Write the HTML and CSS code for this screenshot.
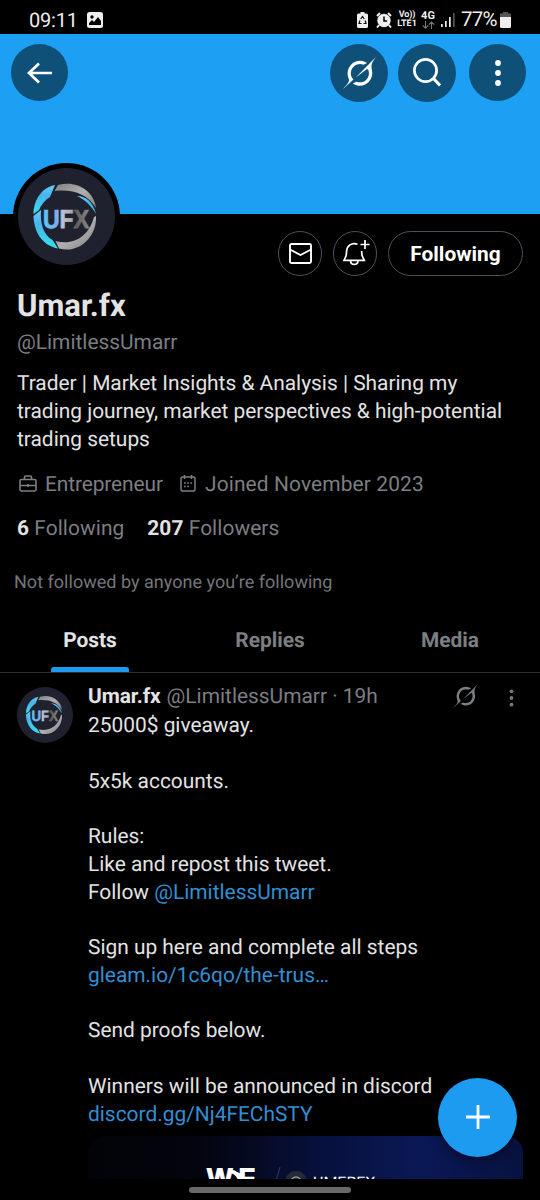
FILE: index.html
```html
<!DOCTYPE html>
<html lang="en">
<head>
<meta charset="utf-8">
<title>Umar.fx</title>
<link rel="stylesheet" href="styles.css">
</head>
<body>
<svg width="0" height="0" class="defs" aria-hidden="true">
  <defs>
    <linearGradient id="cyan" x1="0" y1="0" x2="0" y2="1"><stop offset="0" stop-color="#66d0fa"/><stop offset=".35" stop-color="#46b4ec"/><stop offset="1" stop-color="#35e0ee"/></linearGradient>
    <linearGradient id="silver" x1="0" y1="0" x2="1" y2="1"><stop offset="0" stop-color="#808080"/><stop offset=".5" stop-color="#b0b0b0"/><stop offset="1" stop-color="#808080"/></linearGradient>
    <linearGradient id="letters" x1="0" y1="0" x2="1" y2="0"><stop offset="0" stop-color="#55c9f2"/><stop offset=".3" stop-color="#7eaaf0"/><stop offset=".42" stop-color="#b5c2dd"/><stop offset=".62" stop-color="#aaa"/><stop offset=".7" stop-color="#5c5c5c"/><stop offset="1" stop-color="#8a8a8a"/></linearGradient>
    <symbol id="grok" viewBox="0 0 33 32"><path fill="currentColor" d="M12.745 20.54l10.97-8.19c.539-.4 1.307-.244 1.564.38 1.349 3.288.746 7.241-1.938 9.955-2.683 2.714-6.417 3.31-9.83 1.954l-3.728 1.745c5.347 3.697 11.84 2.782 15.898-1.324 3.219-3.255 4.216-7.692 3.284-11.693l.008.009c-1.351-5.878.332-8.227 3.782-13.031L33 0l-4.540 4.590v-.014L12.743 20.544m-2.263 1.987c-3.837-3.707-3.175-9.446.1-12.755 2.420-2.449 6.388-3.448 9.852-1.979l3.720-1.737c-.67-.49-1.530-1.017-2.515-1.387-4.455-1.854-9.789-.931-13.410 2.728-3.483 3.523-4.579 8.940-2.697 13.561 1.405 3.454-.899 5.898-3.220 8.364C1.490 30.200.666 31.074 0 32l10.478-9.466"/></symbol>
    <symbol id="ufx" viewBox="0 0 97 97">
      <circle cx="48.500" cy="48.500" r="48.500" fill="#20212e"/>
      <path fill="url(#cyan)" d="M37 17C25 19 15.500 31 15.500 46L21 42C23 37 27 32 32 29Z"/>
      <path fill="url(#cyan)" d="M15.500 48C16 66 26 78 40 80.500L34.500 72C26 67 22 57 23 42Z"/>
      <path fill="url(#silver)" d="M40 17C59 12 76 23 78 40C69 26 55 21 36.500 23Z"/>
      <path fill="url(#cyan)" d="M59 28C68 28 75 34 78 46C73 37 67 32 59 28Z"/>
      <path fill="url(#silver)" d="M78 48C79 70 60 86 41 80.500L37.500 73C56 78 71 68 76 49Z"/>
      <text x="25" y="59.500" textLength="46" lengthAdjust="spacingAndGlyphs" class="logo-letters" fill="url(#letters)" stroke="url(#letters)" stroke-width=".8">UFX</text>
    </symbol>
  </defs>
</svg>
<main class="phone">
  <header class="status">
    <span class="clock">09:11</span>
    <svg class="picture" width="16" height="16" viewBox="0 0 16 16"><rect width="16" height="16" rx="2.500" fill="#eee"/><circle cx="5" cy="5" r="1.700"/><path d="M2 13V11l3-3 2 2 4-5 3 4v4Z"/></svg>
    <div class="status-right">
      <svg width="11" height="16" viewBox="0 0 11 16"><path fill="#eee" d="M3.500 0h4v1.500H9.500Q11 1.500 11 3v11.500Q11 16 9.500 16h-8Q0 16 0 14.500V3Q0 1.500 1.500 1.500h2Z"/><path d="M3.700 7l1.800-2.500L7.300 7M8.200 8.500L9 11.500H6.500M4.500 11.500H2l.9-3" fill="none" stroke="#111" stroke-width="1.200"/></svg>
      <svg class="alarm" width="16" height="16" viewBox="0 0 16 16"><circle cx="8" cy="8.500" r="6.700" fill="#eee"/><path d="M1 4l3-3M15 4l-3-3M3 13l-2 2.500M13 13l2 2.500" stroke="#eee" stroke-width="2"/><path d="M8 4.500V9h3" stroke="#000" stroke-width="1.500" fill="none"/></svg>
      <div class="volte"><span class="vo">Vo))</span><span>LTE1</span></div>
      <div class="network"><span>4G</span><svg width="13" height="8" viewBox="0 0 13 8"><path d="M3.500 0v7M.8 4.500l2.700 2.700 2.700-2.700M9.500 8V1M6.800 3.700L9.500 1l2.700 2.700" fill="none" stroke="#777" stroke-width="1.100"/></svg></div>
      <svg class="signal" width="14" height="14" viewBox="0 0 14 14"><path fill="#eee" d="M0 11h1.700v3H0zM4 8h1.700v6H4zM8 4h1.700v10H8z"/><path fill="#555" d="M12 0h1.700v14H12z"/></svg>
      <span class="percent">77%</span>
      <svg width="11" height="16" viewBox="0 0 11 16"><path fill="#555" d="M3 0h5v1.500h3V5H0V1.500h3Z"/><path fill="#eee" d="M0 5h11v9.500Q11 16 9.500 16h-8Q0 16 0 14.500Z"/></svg>
    </div>
  </header>

  <section class="banner">
    <button class="round back" aria-label="Back"><svg width="26" height="22" viewBox="0 0 26 22"><path d="M25 11H2M12 1.500L2 11l10 9.500" fill="none" stroke="#fff" stroke-width="2.700"/></svg></button>
    <div class="banner-actions">
      <button class="round large" aria-label="Grok"><svg width="33" height="32"><use href="#grok"/></svg></button>
      <button class="round large" aria-label="Search"><svg class="search" width="28" height="29" viewBox="0 0 28 29"><circle cx="12.500" cy="12.500" r="11.100" fill="none" stroke="#fff" stroke-width="2.700"/><path d="M20 20l7 7.500" stroke="#fff" stroke-width="3"/></svg></button>
      <button class="round more" aria-label="More"><svg width="6" height="26" viewBox="0 0 6 26" fill="#fff"><circle cx="3" cy="3" r="2.900"/><circle cx="3" cy="13" r="2.900"/><circle cx="3" cy="23" r="2.900"/></svg></button>
    </div>
  </section>

  <section class="profile">
    <div class="profile-top">
      <div class="avatar"><svg width="97" height="97"><use href="#ufx"/></svg></div>
      <div class="profile-actions">
        <button class="outline" aria-label="Message"><svg width="23" height="21" viewBox="0 0 23 21" fill="none" stroke="#fff" stroke-width="1.900"><rect x="1" y="1" width="21" height="19" rx="1.500"/><path d="M1 6.500l10.500 5.500L22 6.500"/></svg></button>
        <button class="outline" aria-label="Notifications"><svg class="bell" width="28" height="26" viewBox="0 0 28 26" fill="none" stroke="#fff" stroke-width="1.700"><path d="M15.500 4.200C9.500 2 5 6 4.600 11L4.200 15.500 2 20.300H22.300L20 15.500 19.600 11"/><path d="M8.500 20.500c0 5.300 7.500 5.300 7.500 0M23 0v9M18.500 4.500h9"/></svg></button>
        <button class="outline following">Following</button>
      </div>
    </div>
    <h1>Umar.fx</h1>
    <p class="handle">@LimitlessUmarr</p>
    <p class="bio">Trader | Market Insights &amp; Analysis | Sharing my<br>trading journey, market perspectives &amp; high-potential<br>trading setups</p>
    <div class="meta">
      <svg width="18" height="17" viewBox="0 0 18 17" fill="none" stroke="#7b7e82" stroke-width="1.600"><rect x="1" y="4.500" width="16" height="11.500" rx="1.500"/><path d="M5.500 4V2q0-1 1-1h5q1 0 1 1v2M1 10.500h16M9 9v3"/></svg>
      <span class="job">Entrepreneur</span>
      <svg width="16" height="17" viewBox="0 0 16 17" fill="none" stroke="#7b7e82" stroke-width="1.500"><rect x="1" y="2" width="14" height="14" rx="1.500"/><path d="M4.500 0v4M11.500 0v4"/><path d="M4 8h9M4 11.500h6" stroke-width="1.600" stroke-dasharray="1.700 1.500"/></svg>
      <span class="joined">Joined November 2023</span>
    </div>
    <div class="counts"><span><b>6</b> Following</span><span><b>207</b> Followers</span></div>
    <p class="mutual">Not followed by anyone you’re following</p>
  </section>

  <nav class="tabs"><a class="active"><span>Posts</span></a><a><span>Replies</span></a><a><span>Media</span></a></nav>

  <article class="post">
    <svg class="post-avatar" width="56" height="56"><use href="#ufx"/></svg>
    <div class="post-main">
      <div class="post-head">
        <b>Umar.fx</b><span class="post-handle">@LimitlessUmarr · 19h</span>
        <svg class="post-grok" width="25" height="24"><use href="#grok"/></svg>
        <svg class="post-more" width="5" height="18" viewBox="0 0 5 18" fill="#73767a"><circle cx="2.500" cy="2.300" r="1.900"/><circle cx="2.500" cy="9" r="1.900"/><circle cx="2.500" cy="15.700" r="1.900"/></svg>
      </div>
      <p class="post-text">25000$ giveaway.<br><br>5x5k accounts.<br><br>Rules:<br>Like and repost this tweet.<br>Follow <a>@LimitlessUmarr</a><br><br>Sign up here and complete all steps<br><a>gleam.io/1c6qo/the-trus…</a><br><br>Send proofs below.<br><br>Winners will be announced in discord<br><a>discord.gg/Nj4FEChSTY</a></p>
      <div class="media">
        <span class="brand">W<svg width="14" height="14" viewBox="0 0 14 14" fill="#fff"><path d="M1 4.500Q5 3 8 6L14 8.500V14H9Q7 8 0 6.500Z"/></svg>F</span>
        <svg class="divider" width="8" height="18" viewBox="0 0 8 18"><path d="M6 0L1 18" stroke="#263c74"/></svg>
        <span class="seal"><svg width="12" height="12" viewBox="0 0 12 12"><circle cx="6" cy="6" r="5" fill="none" stroke="#999" stroke-width="1.300"/></svg></span>
        <span class="partner">UMERFX</span>
      </div>
    </div>
  </article>
  <footer class="gesture"><i></i></footer>
  <button class="compose" aria-label="New post"><svg width="24" height="24" viewBox="0 0 24 24"><path d="M12 0v24M0 12h24" stroke="#fff" stroke-width="2.800"/></svg></button>
</main>
</body>
</html>
```

FILE: styles.css
```css
* { box-sizing: border-box; }
body { margin: 0; background: #000; color: #e2e3e4; font-family: Roboto, sans-serif; text-rendering: geometricPrecision; }
h1, p { margin: 0; }
svg { display: block; flex: none; }
.defs { position: absolute; }
button { display: flex; align-items: center; justify-content: center; border: 0; padding: 0; font-family: inherit; flex: none; }
.phone { position: relative; width: 540px; height: 1200px; overflow: hidden; display: flex; flex-direction: column; }
.phone > * { flex: none; }

.status { height: 34px; padding: 6px 29px 0; display: flex; align-items: center; color: #eee; }
.clock { font-size: 20px; width: 58px; white-space: nowrap; letter-spacing: -.2px; }
.status-right { margin-left: auto; display: flex; align-items: center; }
.alarm { margin-left: 8px; }
.volte { width: 20px; margin-left: 5px; font-size: 9px; line-height: 9px; font-weight: 700; display: grid; justify-items: center; }
.vo { letter-spacing: -.2px; }
.network { width: 14px; margin-left: 4px; font-size: 11px; line-height: 10px; font-weight: 700; display: grid; justify-items: center; }
.signal { margin-left: 6px; }
.percent { font-size: 20.500px; margin-left: 6px; width: 39px; letter-spacing: -.8px; white-space: nowrap; }

.banner { height: 180px; padding: 10px 14px 0 11px; background: #1d9ff3; display: flex; align-items: flex-start; }
.round { width: 57px; height: 57px; border-radius: 50%; background: #0f5078; color: #fff; }
.large { width: 58px; height: 58px; }
.search { margin: 0 1px 2px 0; }
.more { margin-left: 3px; }
.banner-actions { margin-left: auto; display: flex; gap: 10px; }

.profile { height: 394px; padding: 0 17px; }
.profile-top { height: 73px; display: flex; align-items: flex-start; }
.avatar { width: 107px; height: 107px; margin: -51px 0 0 -4px; padding: 5px; background: #000; border-radius: 50%; flex: none; }
.logo-letters { font: 900 26px "Liberation Sans", sans-serif; }
.profile-actions { margin: 17px 0 0 auto; display: flex; gap: 11px; }
.outline { width: 44px; height: 45px; border: 1px solid #46525d; border-radius: 23px; background: #000; color: #fff; }
.bell { margin-top: -2px; margin-left: 1px; }
.following { width: 135px; font-size: 20.900px; font-weight: 700; }
h1 { font-size: 31px; line-height: 38px; font-weight: 700; }
.handle { margin-top: 4px; font-size: 20.900px; line-height: 28px; color: #7b7e82; }
.bio { margin-top: 14px; font-size: 20.900px; line-height: 27.750px; white-space: nowrap; }
.meta { margin-top: 17px; height: 28px; padding-left: 2px; display: flex; align-items: center; font-size: 20.900px; color: #7b7e82; white-space: nowrap; }
.meta svg { margin-bottom: 4px; }
.job { margin-left: 8px; width: 135px; letter-spacing: -.1px; }
.joined { margin-left: 9px; letter-spacing: .13px; }
.counts { margin-top: 16px; height: 28px; display: flex; gap: 23px; font-size: 20.900px; line-height: 28px; color: #7b7e82; letter-spacing: .07px; }
.counts b { color: #e2e3e4; }
.mutual { margin: 28px 0 0 -3px; font-size: 18px; line-height: 24px; color: #73767a; letter-spacing: .02px; }

.tabs { height: 65px; display: grid; grid-template-columns: repeat(3, 1fr); border-bottom: 1px solid #2b2d30; color: #7b7e82; font-size: 20.900px; font-weight: 700; text-align: center; }
.tabs a { padding-top: 19px; line-height: 28px; display: grid; grid-template-rows: 28px 1fr; }
.tabs .active { color: #e2e3e4; }
.active::after { content: ""; width: 78px; height: 5px; border-radius: 3px 3px 0 0; background: #1d9bf0; align-self: end; justify-self: center; }

.post { height: 506px; overflow: hidden; display: flex; padding: 10px 17px 0 17px; }
.post-avatar { margin-top: 4px; }
.post-main { width: 435px; margin-left: 15px; flex: none; }
.post-head { height: 28px; display: flex; align-items: center; font-size: 20.900px; white-space: nowrap; }
.post-head b { letter-spacing: -.1px; }
.post-handle { color: #7b7e82; margin-left: 6px; }
.post-grok { margin-left: auto; margin-top: -2px; color: #7b7e82; }
.post-more { margin: 2px 9px 0 31px; }
.post-text { margin-top: 2px; font-size: 20.900px; line-height: 27.760px; white-space: nowrap; }
.post-text a { color: #328fd4; }
.media { height: 60px; margin-top: 7px; border-radius: 17px; background: linear-gradient(90deg, #020307 0, #03040d 25%, #07103a 52%, #0a1856 76%, #07123f 100%); padding: 31px 0 0 119px; display: flex; align-items: flex-start; color: #fff; }
.brand { display: flex; font: 900 27px/24px "Liberation Sans", sans-serif; width: 50px; margin-top: -1px; -webkit-text-stroke: 1px #fff; }
.brand svg { margin: 0 -5px 0 -3px; }
.divider { margin-left: 17px; }
.seal { width: 22px; height: 22px; margin-left: 3px; margin-top: 4px; background: #252a38; border-radius: 50%; display: flex; justify-content: center; padding-top: 5px; }
.partner { font-size: 16px; line-height: 20px; margin: 6px 0 0 6px; }
.gesture { height: 21px; display: flex; justify-content: center; padding-top: 8px; background: #000; }
.gesture i { width: 162px; height: 6px; border-radius: 3px; background: #68696b; }
.compose { position: absolute; right: 23px; bottom: 43.500px; width: 79px; height: 79px; border-radius: 50%; background: #1d9bf0; box-shadow: 0 4px 10px #0006; }
```
